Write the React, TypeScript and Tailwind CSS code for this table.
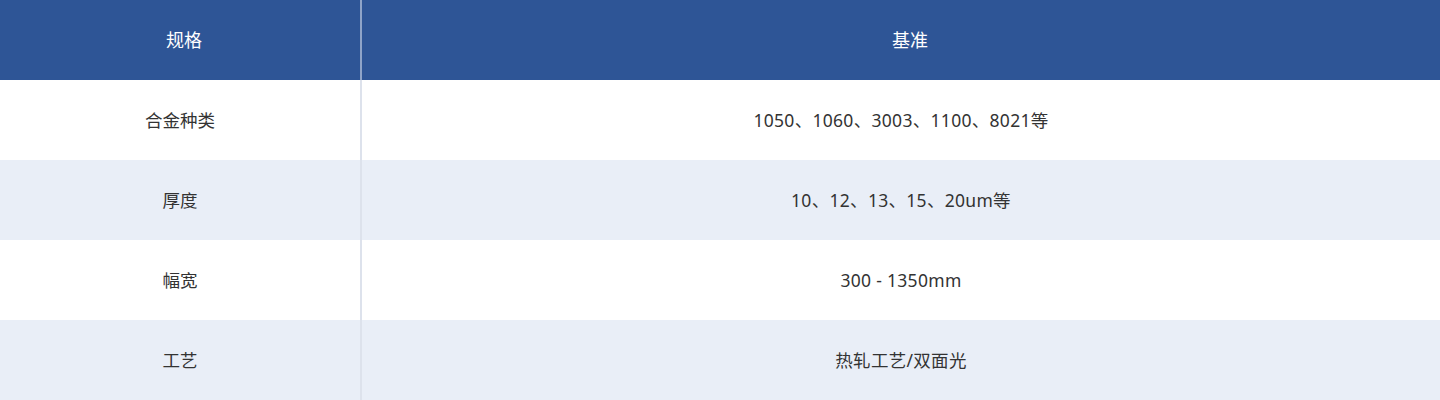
import React from "react";

const rows: [string, string][] = [
  ["合金种类", "1050、1060、3003、1100、8021等"],
  ["厚度", "10、12、13、15、20um等"],
  ["幅宽", "300 - 1350mm"],
  ["工艺", "热轧工艺/双面光"],
];

const font = { fontFamily: '"Noto Sans", "Noto Sans CJK SC", sans-serif' };

const App: React.FC = () => {
  return (
    <div className="w-[1440px] h-[400px] bg-white" style={font}>
      <div className="flex h-20 bg-[#2e5596] text-white text-lg">
        <div className="w-[360px] flex items-center justify-center pl-2">规格</div>
        <div className="w-0.5 bg-[#8fa4c8]" />
        <div className="flex-1 flex items-center justify-center pl-[18px]">基准</div>
      </div>
      {rows.map(([name, value], i) => (
        <div
          key={name}
          className={`flex h-20 text-[17.5px] text-[#333333] ${i % 2 === 1 ? "bg-[#e9eef7]" : "bg-white"}`}
        >
          <div className="w-[360px] flex items-center justify-center">{name}</div>
          <div className="w-0.5 bg-[#dde2ec]" />
          <div className="flex-1 flex items-center justify-center tracking-[0.3px]">{value}</div>
        </div>
      ))}
    </div>
  );
};

export default App;
